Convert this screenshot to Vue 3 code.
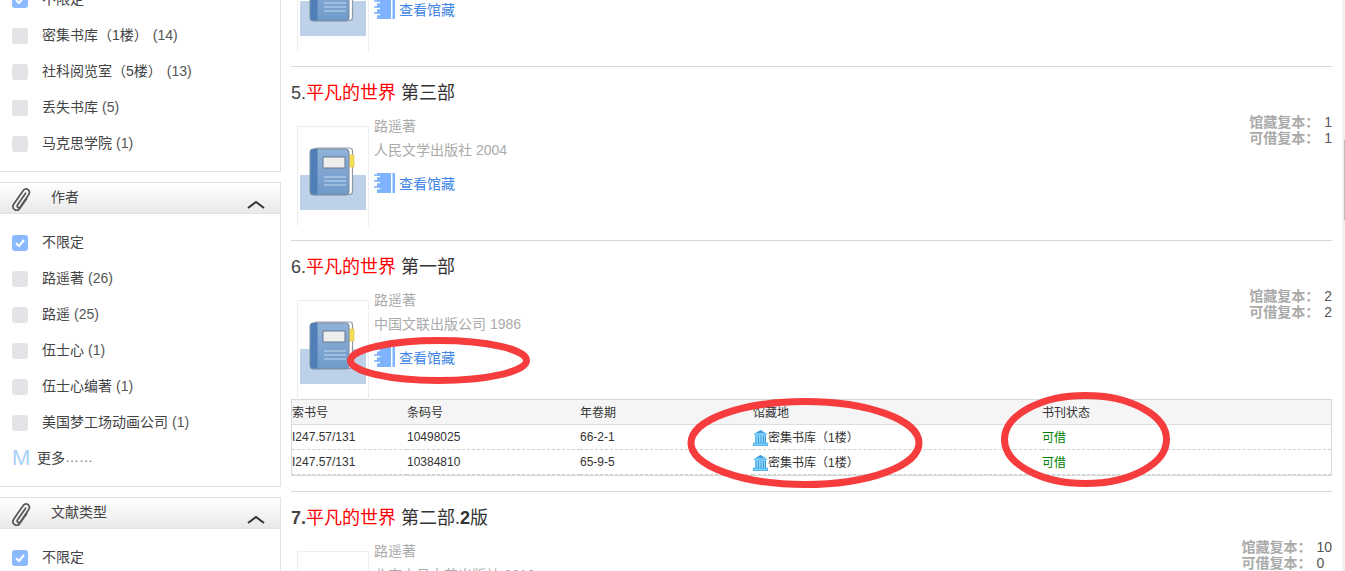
<script setup>
const facets = [
  { title: null, more: false, rows: [
    { t: '不限定', on: true }, { t: '密集书库（1楼）', c: '(14)', gap: true }, { t: '社科阅览室（5楼）', c: '(13)', gap: true },
    { t: '丢失书库', c: '(5)' }, { t: '马克思学院', c: '(1)' } ] },
  { title: '作者', more: true, rows: [
    { t: '不限定', on: true }, { t: '路遥著', c: '(26)' }, { t: '路遥', c: '(25)' }, { t: '伍士心', c: '(1)' },
    { t: '伍士心编著', c: '(1)' }, { t: '美国梦工场动画公司', c: '(1)' } ] },
  { title: '文献类型', more: false, rows: [ { t: '不限定', on: true } ] },
]
const items = [
  { n: '4.', sub: '第四部', pub: '人民文学出版社 2004', hold: 1, avail: 1 },
  { n: '5.', sub: '第三部', pub: '人民文学出版社 2004', hold: 1, avail: 1 },
  { n: '6.', sub: '第一部', pub: '中国文联出版公司 1986', hold: 2, avail: 2, copies: [
    { call: 'I247.57/131', bar: '10498025', vol: '66-2-1' },
    { call: 'I247.57/131', bar: '10384810', vol: '65-9-5' } ] },
  { n: '7.', bold: true, sub: '第二部.', subB: '2', subE: '版', pub: '北京十月文艺出版社 2012', hold: 10, avail: 0 },
]
</script>

<template>
  <div class="page">
    <aside class="side">
      <section v-for="(f, i) in facets" :key="i" class="panel" :class="{ first: !f.title }">
        <header v-if="f.title" class="phead">
          <svg class="clip" width="20" height="24" viewBox="0 0 20 24" fill="none" stroke="#555" stroke-width="1.7" stroke-linecap="round">
            <path d="M14.6 6.2 L6.6 17.8 C5.2 20 7.9 21.8 9.4 19.8 L17.6 7.8 C20.2 3.6 15.4 -.2 12.3 3.4 L2.8 17 C-.2 21.4 5.2 25.4 8.6 21.8 L15.6 11.8" />
          </svg>
          <span class="ptitle">{{ f.title }}</span>
          <svg class="caret" width="18" height="9" viewBox="0 0 18 9" fill="none" stroke="#333" stroke-width="2">
            <path d="M1 8 L9 2 L17 8" />
          </svg>
        </header>
        <div class="pbody">
          <div v-for="r in f.rows" :key="r.t" class="frow">
            <span class="cb" :class="{ on: r.on }">
              <svg v-if="r.on" width="16" height="16" viewBox="0 0 16 16" fill="none" stroke="#fff" stroke-width="2">
                <path d="M4 8.2 L7 11 L12 5" />
              </svg>
            </span>
            <span class="flabel">{{ r.t }}</span>
            <span v-if="r.c" class="fcount" :class="{ wide: r.gap }">{{ r.c }}</span>
          </div>
          <div v-if="f.more" class="frow more">
            <span class="m">M</span><span class="flabel">更多</span><span class="dots">……</span>
          </div>
        </div>
      </section>
    </aside>

    <main class="list">
      <article v-for="it in items" :key="it.n" class="item">
        <h3 class="title" :class="{ bold: it.bold }">
          {{ it.n }}<span class="hit">平凡的世界</span> <span class="sub">{{ it.sub }}<b v-if="it.subB">{{ it.subB }}</b>{{ it.subE }}</span>
        </h3>
        <div class="body">
          <div class="cover">
            <svg width="72" height="100" viewBox="0 0 72 100">
              <defs>
                <linearGradient id="cv" x1="0" y1="0" x2="0" y2="1">
                  <stop offset="0" stop-color="#8fb2d8" />
                  <stop offset="1" stop-color="#6f9ac8" />
                </linearGradient>
              </defs>
              <rect x="3" y="49" width="66" height="35" fill="#bdd2e8" />
              <rect x="17" y="22" width="38.5" height="46.5" rx="3" fill="#fff" stroke="#8f99a6" stroke-width="1.2" />
              <rect x="51" y="29" width="6" height="12" fill="#f6dc57" stroke="#e3c648" stroke-width=".6" />
              <rect x="13" y="23" width="39" height="46" rx="3" fill="url(#cv)" stroke="#7d8a99" stroke-width="1" />
              <path d="M13.5 26 a3 3 0 0 1 3 -3 h4 v45.5 h-4 a3 3 0 0 1 -3 -3 z" fill="#4f7fb6" />
              <rect x="26" y="31" width="22" height="11" fill="#eeeeee" stroke="#66788c" stroke-width="1" />
              <path d="M27 51 H49 M27 55 H49 M27 59 H49" stroke="#c5daf0" stroke-width="1" />
            </svg>
          </div>
          <div class="meta">
            <div class="line">路遥著</div>
            <div class="line">{{ it.pub }}</div>
            <a class="link">
              <svg width="21" height="20" viewBox="0 0 21 20">
                <rect x="3" y="0" width="14" height="20" fill="#7fb3ff" />
                <rect x="18.5" y="0" width="2.5" height="20" fill="#7fb3ff" />
                <path d="M0 3.5 H6 M0 9.5 H6 M0 15.5 H6" stroke="#fff" stroke-width="1.4" />
                <path d="M0 2 H5 M0 8 H5 M0 14 H5" stroke="#7fb3ff" stroke-width="1.4" />
              </svg>
              <span>查看馆藏</span>
            </a>
          </div>
          <div class="stats">
            <div><b>馆藏复本：</b><span class="num">{{ it.hold }}</span></div>
            <div><b>可借复本：</b><span class="num">{{ it.avail }}</span></div>
          </div>
        </div>
        <table v-if="it.copies" class="copies">
          <thead>
            <tr><th class="c1">索书号</th><th class="c2">条码号</th><th class="c3">年卷期</th><th class="c4">馆藏地</th><th>书刊状态</th></tr>
          </thead>
          <tbody>
            <tr v-for="c in it.copies" :key="c.bar">
              <td>{{ c.call }}</td>
              <td>{{ c.bar }}</td>
              <td>{{ c.vol }}</td>
              <td class="loc">
                <svg width="15" height="16" viewBox="0 0 15 16">
                  <path d="M7.5 0 L13.5 3.6 H1.5 Z" fill="#3c9be0" />
                  <rect x="1" y="3.5" width="13" height="1.6" fill="#69c8f5" />
                  <rect x="2" y="5" width="11" height="8" fill="#8fd8fa" />
                  <path d="M3 5.5 V13 M5.5 5.5 V13 M8 5.5 V13 M10.5 5.5 V13 M12.5 5.5 V13" stroke="#3c9be0" stroke-width="1" />
                  <rect x=".3" y="13" width="14.4" height="2.7" fill="#6fd0fa" stroke="#3c9be0" stroke-width=".6" />
                </svg><span>密集书库（1楼）</span>
              </td>
              <td class="ok">可借</td>
            </tr>
          </tbody>
        </table>
      </article>
    </main>

    <div class="track"><div class="thumb"></div></div>

    <svg class="rings" width="1345" height="571" viewBox="0 0 1345 571" fill="none" stroke="#f63c3c" stroke-width="7">
      <ellipse cx="438.5" cy="360.5" rx="88" ry="20" />
      <ellipse cx="805" cy="443" rx="114" ry="41.5" />
      <ellipse cx="1085.5" cy="439.5" rx="81" ry="44" />
    </svg>
  </div>
</template>

<style scoped>
.page {
  position: relative;
  display: flex;
  align-items: flex-start;
  width: 1345px;
  height: 571px;
  overflow: hidden;
  background: #fff;
  font-family: "Liberation Sans", "Noto Sans CJK SC", sans-serif;
  color: #444;
}
.side {
  flex: none;
  width: 281px;
  margin-top: -19px;
  display: flex;
  flex-direction: column;
  gap: 10px;
}
.panel {
  border-right: 1px solid #e2e2e2;
  border-bottom: 1px solid #e2e2e2;
  box-sizing: border-box;
}
.phead {
  display: flex;
  align-items: flex-start;
  height: 32px;
  box-sizing: border-box;
  border-top: 1px solid #e2e2e2;
  border-bottom: 1px solid #e2e2e2;
  background: linear-gradient(#ffffff, #e9e9e9);
}
.clip { margin: 4px 0 0 11px; flex: none; }
.ptitle { margin-left: 20px; font-size: 14px; line-height: 29px; color: #444; }
.caret { margin: 17px 15px 0 auto; flex: none; }
.pbody { padding: 10px 0; }
.first .pbody { padding-top: 0; }
.frow {
  display: flex;
  align-items: center;
  height: 36px;
  padding-left: 12px;
  font-size: 14px;
  color: #444;
}
.cb {
  flex: none;
  width: 16px;
  height: 16px;
  margin-right: 14px;
  margin-top: 2px;
  border-radius: 3px;
  background: #e3e4e8;
}
.cb.on { background: #8ab9ff; }
.cb svg { display: block; }
.flabel { padding-bottom: 2px; }
.fcount { margin-left: 4px; padding-bottom: 1px; color: #555; }
.fcount.wide { margin-left: 5px; }
.more { padding-left: 12px; }
.m { width: 25px; font-size: 22px; color: #a9d0fb; line-height: 1; }
.dots { color: #777; padding-bottom: 2px; }

.list {
  flex: none;
  width: 1041px;
  margin-left: 10px;
  margin-top: -108px;
}
.item {
  border-top: 1px solid #d8d8d8;
  padding: 14px 0 14px;
}
.title {
  margin: 0;
  font-size: 18px;
  font-weight: 400;
  line-height: 24px;
  height: 24px;
  color: #444;
  white-space: pre-wrap;
}
.title.bold { font-weight: 700; }
.hit { color: #f00; font-weight: 400; }
.sub { color: #333; font-weight: 400; }
.sub b { font-weight: 700; }
.body {
  display: flex;
  align-items: flex-start;
  margin-top: 21px;
  height: 100px;
  padding-left: 6px;
}
.cover {
  flex: none;
  width: 72px;
  height: 100px;
  box-sizing: border-box;
  border: 1px solid #eeeeee;
  border-bottom: 0;
}
.cover svg { display: block; margin: -1px 0 0 -1px; }
.meta { margin-left: 5px; margin-top: -12px; font-size: 14px; color: #aaa; }
.line { height: 24px; line-height: 24px; }
.link {
  display: flex;
  align-items: center;
  gap: 4px;
  margin-top: 11px;
  height: 20px;
  color: #3f86e6;
}
.link svg { flex: none; }
.stats {
  margin-left: auto;
  margin-top: -12px;
  font-size: 14px;
  line-height: 16px;
  color: #aaa;
}
.stats b { font-weight: 700; }
.num { margin-left: 5px; color: #555; }
.copies {
  width: 100%;
  margin: -1px 0 1px;
  border-collapse: separate;
  border-spacing: 0;
  table-layout: fixed;
  font-size: 12px;
  border: 1px solid #d8d8d8;
  color: #333;
}
.copies th {
  height: 22px;
  padding: 0 0 2px;
  text-align: left;
  font-weight: 400;
  background: #f5f5f5;
  border-bottom: 1px solid #dedede;
  color: #333;
}
.copies td {
  height: 24px;
  padding: 0;
  border-bottom: 1px dashed #cfcfcf;
}
.c1 { width: 115px; }
.c2 { width: 173px; }
.c3 { width: 173px; }
.c4 { width: 289px; }
.loc svg { vertical-align: -4px; }
.copies td.ok { color: #008000; height: 22px; padding-bottom: 2px; }
.track {
  flex: none;
  width: 3px;
  height: 571px;
  margin-left: 10px;
  background: #f1f1f1;
  position: relative;
}
.thumb {
  position: absolute;
  top: 140px;
  left: 2px;
  width: 1px;
  height: 80px;
  background: #bdbdbd;
}
.rings { position: absolute; left: 0; top: 0; pointer-events: none; }
</style>
